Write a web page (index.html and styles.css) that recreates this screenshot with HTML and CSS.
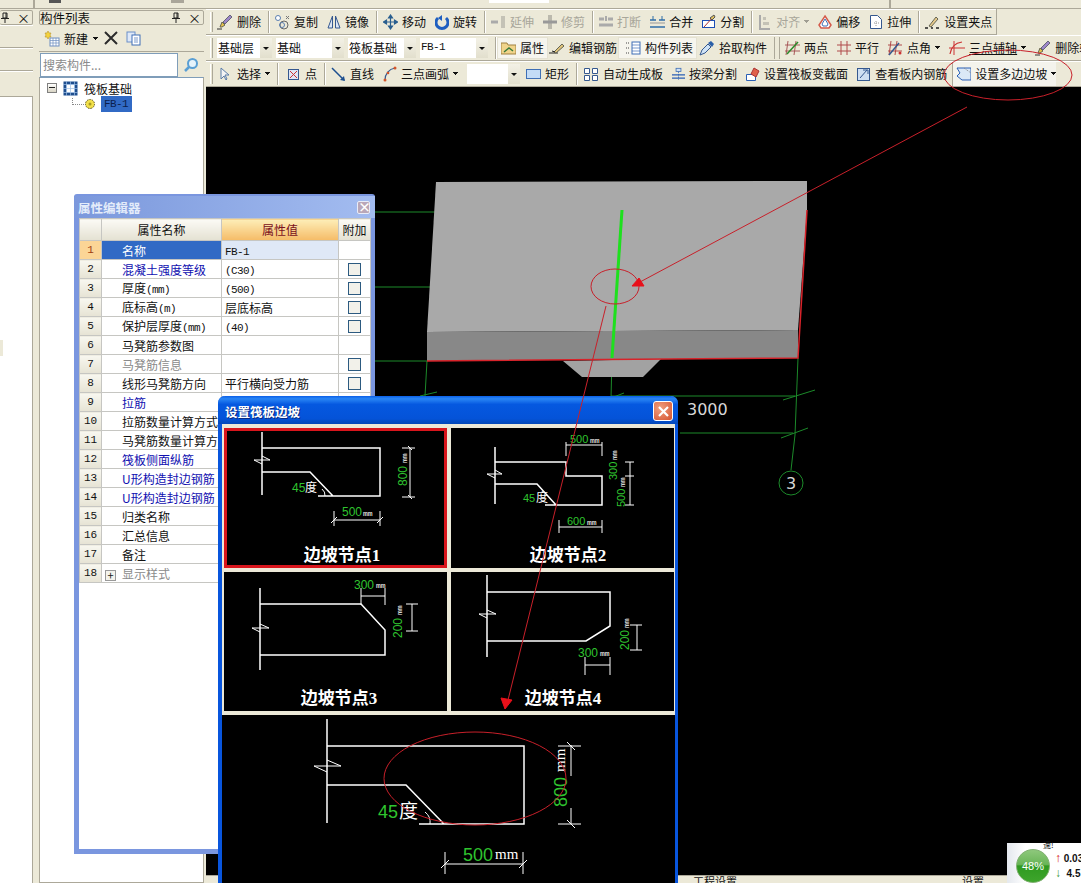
FILE: index.html
```html
<!DOCTYPE html>
<html lang="zh-CN">
<head>
    <meta charset="UTF-8">
    <title>筏板基础 - 设置筏板边坡</title>
    <link rel="stylesheet" href="styles.css">
</head>
<body>
<div class="app">
    <!-- top menu strip, mostly cut off -->
    <div class="topstrip">
        <i class="stub stub-a"></i><i class="stub stub-b"></i><i class="stub stub-c"></i><i class="stub stub-d"></i><i class="stub stub-e"></i>
    </div>

    <div class="workspace">
        <div class="dock dock-narrow">
            <div class="dock-head"><span class="dock-title"></span><svg class="pin" width="10" height="11" viewBox="0 0 10 11"><path d="M3 1h4v5H3zM1 6.500h8M5 7v4M6 1v5" fill="none" stroke="#222"/></svg><span class="close">&times;</span></div>
            <div class="dock-row"></div>
            <div class="dock-row"></div>
            <div class="dock-row dock-row-last"></div>
            <div class="dock-white"></div>
        </div>

        <div class="dock dock-list">
            <div class="dock-head"><span class="dock-title">构件列表</span><svg class="pin" width="10" height="11" viewBox="0 0 10 11"><path d="M3 1h4v5H3zM1 6.500h8M5 7v4M6 1v5" fill="none" stroke="#222"/></svg><span class="close">&times;</span></div>
            <div class="list-tools">
                <svg width="17" height="17" viewBox="0 0 17 17"><path d="M5 1l1 2h2l-1 2 1 2H6L5 9 4 7H2l1-2-1-2h2z" fill="#f4d23c" stroke="#b8962a" stroke-width=".6"/><rect x="7" y="8" width="9" height="8" fill="#fff" stroke="#6f8fc0"/><path d="M7 10.500h9M7 13h9M10 8v8M13 8v8" stroke="#6f8fc0" stroke-width=".7"/></svg>
                <span>新建</span><i class="caret"></i>
                <svg class="tool-x" width="14" height="14" viewBox="0 0 14 14"><path d="M1 1l12 12M13 1L1 13" stroke="#2b2b2b" stroke-width="2"/></svg>
                <svg class="tool-copy" width="15" height="15" viewBox="0 0 15 15"><rect x="1" y="1" width="8" height="10" fill="#dfe9f8" stroke="#6a8fc8"/><rect x="6" y="4" width="8" height="10" fill="#fff" stroke="#3f6fb5"/><path d="M8 7h4M8 9h4M8 11h4" stroke="#3f6fb5" stroke-width=".7"/></svg>
            </div>
            <div class="list-search">
                <input class="search-input" type="text" placeholder="搜索构件...">
                <svg width="16" height="16" viewBox="0 0 16 16"><circle cx="9.500" cy="6.500" r="4.500" fill="#e6f3fb" stroke="#5a9fd4" stroke-width="2"/><path d="M6 10l-4 4" stroke="#5a9fd4" stroke-width="2.500"/></svg>
            </div>
            <div class="tree">
                <div class="tree-root">
                    <span class="tree-minus"></span>
                    <svg width="15" height="15" viewBox="0 0 15 15"><rect x=".5" y=".5" width="14" height="14" fill="#1f4f8f"/><rect x="3.500" y="3.500" width="8" height="8" fill="#fff"/><path d="M0 3.500h15M0 7.500h15M0 11.500h15M3.500 0v15M7.500 0v15M11.500 0v15" stroke="#9fc0e6" stroke-width=".7"/></svg>
                    <span>筏板基础</span>
                </div>
                <div class="tree-child">
                    <span class="tree-dots"></span>
                    <svg width="12" height="12" viewBox="0 0 12 12"><circle cx="6" cy="6" r="4.500" fill="#f2e04a" stroke="#5a5020" stroke-dasharray="1.500 1"/><circle cx="6" cy="6" r="1.500" fill="#a89a20"/></svg>
                    <span class="tree-sel">FB-1</span>
                </div>
            </div>
        </div>

        <div class="main">
            <div class="tbar tbar-first">
                <i class="grip"></i>
                <div class="tbtn"><svg width="16" height="16" viewBox="0 0 16 16"><path d="M0 15h5" stroke="#333"/><path d="M3 13l2-5 3 3-3 2z" fill="#e6c24a" stroke="#665"/><path d="M6 8l7-7 2 2-7 7z" fill="#9c86c8" stroke="#667"/></svg><span>删除</span></div>
                <i class="sep"></i>
                <div class="tbtn"><svg width="15" height="16" viewBox="0 0 15 16"><circle cx="3" cy="4" r="2.500" fill="#fff" stroke="#5b7fb0"/><circle cx="9" cy="11" r="4" fill="none" stroke="#666"/><circle cx="7" cy="11" r="2.500" fill="none" stroke="#5b7fb0"/><path d="M11 2l3 3M14 2l-3 3" stroke="#777"/></svg><span>复制</span></div>
                <div class="tbtn"><svg width="14" height="16" viewBox="0 0 14 16"><path d="M5.500 2v12H1zM8.500 2v12H13z" fill="#dce6f5" stroke="#35588f"/></svg><span>镜像</span></div>
                <i class="sep"></i>
                <div class="tbtn"><svg width="15" height="16" viewBox="0 0 15 16"><path d="M7.500 2v12M1.500 8h12M7.500 1L5.500 4h4zM7.500 15l-2-3h4zM.5 8l3-2v4zM14.500 8l-3-2v4z" fill="#2a5f8f" stroke="#2a5f8f" stroke-width="1.200"/></svg><span>移动</span></div>
                <div class="tbtn"><svg width="14" height="16" viewBox="0 0 14 16"><path d="M3 4a6 6 0 1 0 8 0" fill="none" stroke="#1f5fc0" stroke-width="3"/><path d="M7 1v6L3 4z" fill="#1f5fc0"/></svg><span>旋转</span></div>
                <i class="sep"></i>
                <div class="tbtn off"><svg width="15" height="16" viewBox="0 0 15 16"><path d="M0 8h7" stroke="#aaa" stroke-width="3"/><path d="M10 2h4v12h-4z" fill="#c4c2b6"/></svg><span>延伸</span></div>
                <div class="tbtn off"><svg width="14" height="16" viewBox="0 0 14 16"><path d="M5 1h4v14H5z" fill="#bbb9ad"/><path d="M0 8h14" stroke="#999" stroke-width="3"/></svg><span>修剪</span></div>
                <i class="sep"></i>
                <div class="tbtn off"><svg width="14" height="16" viewBox="0 0 14 16"><path d="M0 5h5M9 5h5M0 11h14" stroke="#aaa" stroke-width="3"/><path d="M7 2v5" stroke="#aaa" stroke-width="2"/></svg><span>打断</span></div>
                <div class="tbtn"><svg width="15" height="16" viewBox="0 0 15 16"><path d="M0 13h15M0 6h6M9 6h6" stroke="#2f6ea8" stroke-width="1.500"/><path d="M3 2v4M12 2v4" stroke="#2f6ea8"/><path d="M0 9h15" stroke="#999"/></svg><span>合并</span></div>
                <div class="tbtn"><svg width="14" height="16" viewBox="0 0 14 16"><rect x=".5" y="6.500" width="12" height="7" fill="#fff" stroke="#1d4fb5"/><path d="M2 13L12 2" stroke="#a33"/><path d="M8 4l4-3 1 2-3 3z" fill="#e0c060" stroke="#555"/></svg><span>分割</span></div>
                <i class="sep"></i>
                <div class="tbtn off"><svg width="14" height="16" viewBox="0 0 14 16"><path d="M2 1v14h10" fill="none" stroke="#aaa" stroke-width="2"/><path d="M5 3h3v3H5zM5 8h6v3H5z" fill="#c4c2b6"/></svg><span>对齐</span><i class="caret caret-off"></i></div>
                <div class="tbtn"><svg width="14" height="16" viewBox="0 0 14 16"><path d="M7 2l6 9-2 3H3l-2-3z" fill="#fff" stroke="#d45a4a" stroke-width="1.500"/><path d="M7 5l3 5-1 2H5l-1-2z" fill="none" stroke="#3f6fb5"/></svg><span>偏移</span></div>
                <div class="tbtn"><svg width="14" height="16" viewBox="0 0 14 16"><path d="M1.500 1.500h7l4 4v9h-11z" fill="#fff" stroke="#35588f"/><path d="M5 9h5M7 7v5" stroke="#999" stroke-dasharray="1 1"/></svg><span>拉伸</span></div>
                <i class="sep"></i>
                <div class="tbtn"><svg width="15" height="16" viewBox="0 0 15 16"><path d="M0 14h3M6 14h2M11 14h3" stroke="#222" stroke-width="1.500"/><path d="M4 12l7-9 2 2-7 8z" fill="#e6c98a" stroke="#665"/></svg><span>设置夹点</span></div>
            </div>

            <div class="tbar">
                <i class="grip"></i>
                <div class="combos">
                    <div class="combo combo-sm"><span>基础层</span></div>
                    <div class="combo"><span>基础</span></div>
                    <div class="combo"><span>筏板基础</span></div>
                    <div class="combo"><span class="lat">FB-1</span></div>
                </div>
                <i class="sep"></i>
                <div class="tgroup">
                    <div class="tbtn on"><svg width="15" height="16" viewBox="0 0 15 16"><path d="M0 3h6l1 2h8v9H0z" fill="#f0d48a" stroke="#a08040"/><path d="M3 12l5-4 4 3" fill="none" stroke="#3a7a3a" stroke-width="1.500"/></svg><span>属性</span></div>
                    <div class="tbtn"><svg width="16" height="16" viewBox="0 0 16 16"><path d="M0 13h9" stroke="#222"/><path d="M5 12l8-8 2 2-8 7z" fill="#e0c47a" stroke="#665"/><path d="M3 11l3 1" stroke="#222"/></svg><span>编辑钢筋</span></div>
                    <div class="tbtn on"><svg width="19" height="16" viewBox="0 0 19 16"><rect x="10" y="2" width="8" height="12" fill="#fff" stroke="#3f6fb5"/><path d="M10 5h8M10 8h8M10 11h8" stroke="#3f6fb5" stroke-width=".7"/><path d="M4 3h3M4 8h3M4 13h3" stroke="#444" stroke-dasharray="1 1"/></svg><span>构件列表</span></div>
                    <div class="tbtn"><svg width="17" height="16" viewBox="0 0 17 16"><path d="M2 15l2-5 6-6 3 3-6 6z" fill="#cfe3f6" stroke="#35588f"/><path d="M10 3l3-2 3 3-2 3z" fill="#2b5fa8"/></svg><span>拾取构件</span></div>
                </div>
                <i class="sep sep-double"></i>
                <div class="tbtn"><svg width="15" height="16" viewBox="0 0 15 16"><path d="M3 1l-2 14M11 1l-2 14M0 5h15M0 11h15" stroke="#a85a5a"/><path d="M2 14L13 2" stroke="#2a8a2a" stroke-width="1.500"/></svg><span>两点</span></div>
                <div class="tbtn"><svg width="14" height="16" viewBox="0 0 14 16"><path d="M4 1v14M10 1v14M0 5h14M0 11h14" stroke="#b04a4a"/></svg><span>平行</span></div>
                <div class="tbtn"><svg width="15" height="16" viewBox="0 0 15 16"><path d="M3 1l-2 14M9 1L7 15M0 5h14M0 11h14" stroke="#b04a4a"/><path d="M1 15L11 3" stroke="#35588f" stroke-width="1.500"/><circle cx="12" cy="13" r="1.500" fill="#c33"/></svg><span>点角</span><i class="caret"></i></div>
                <div class="tbtn"><svg width="16" height="16" viewBox="0 0 16 16"><path d="M1 14C2 7 6 3 13 2" fill="none" stroke="#c33" stroke-width="1.200"/><path d="M5 1v14M0 8h16" stroke="#c33"/></svg><span class="under">三点辅轴</span><i class="caret"></i></div>
                <div class="tbtn"><svg width="16" height="16" viewBox="0 0 16 16"><path d="M0 15h5" stroke="#333"/><path d="M3 13l2-5 3 3-3 2z" fill="#e6c24a" stroke="#665"/><path d="M6 8l7-7 2 2-7 7z" fill="#9c86c8" stroke="#667"/></svg><span>删除辅轴</span></div>
            </div>

            <div class="tbar">
                <i class="grip"></i>
                <div class="tbtn"><svg width="16" height="16" viewBox="0 0 16 16"><path d="M4 2v11l3-3 2 4 1-1-2-4h4z" fill="#f4f4f4" stroke="#5a7ca8"/></svg><span>选择</span><i class="caret"></i></div>
                <i class="sep"></i>
                <div class="tbtn"><svg width="17" height="16" viewBox="0 0 17 16"><rect x="4.500" y="3.500" width="10" height="10" fill="#dfe6f4" stroke="#35588f"/><path d="M6 5l7 7M13 5l-7 7" stroke="#c33"/></svg><span>点</span></div>
                <i class="sep"></i>
                <div class="tbtn"><svg width="15" height="16" viewBox="0 0 15 16"><path d="M1 2l12 12" stroke="#1d4f8f" stroke-width="1.500"/><path d="M14 15l-5-1 4-4z" fill="#1d4f8f"/></svg><span>直线</span></div>
                <div class="tbtn"><svg width="14" height="16" viewBox="0 0 14 16"><path d="M2 14C2 8 6 3 12 2" fill="none" stroke="#35588f" stroke-width="1.200"/><circle cx="2" cy="14" r="1.500" fill="#d4552a"/><circle cx="12" cy="2" r="1.500" fill="#d4552a"/><circle cx="5" cy="7" r="1.300" fill="#d4552a"/></svg><span>三点画弧</span><i class="caret"></i></div>
                <div class="combo combo-blank"></div>
                <div class="tbtn"><svg width="15" height="16" viewBox="0 0 15 16"><rect x=".5" y="3.500" width="14" height="9" fill="#c4dcf6" stroke="#3f6fb5"/></svg><span>矩形</span></div>
                <i class="sep"></i>
                <div class="tbtn"><svg width="16" height="16" viewBox="0 0 16 16"><path d="M1.500 2.500h5v5h-5zM9.500 2.500h5v5h-5zM1.500 9.500h5v5h-5zM9.500 9.500h5v5h-5z" fill="#fff" stroke="#35588f"/></svg><span>自动生成板</span></div>
                <div class="tbtn"><svg width="13" height="16" viewBox="0 0 16 16"><rect x="5" y="1" width="6" height="4" fill="#cfe0f4" stroke="#3f6fb5"/><path d="M8 5v10" stroke="#3f6fb5" stroke-dasharray="2 1"/><path d="M0 9h16M0 13h16" stroke="#2a5fb5" stroke-width="1.500"/></svg><span>按梁分割</span></div>
                <div class="tbtn"><svg width="14" height="16" viewBox="0 0 14 16"><path d="M.5 8.500h9v6h-9z" fill="#fff" stroke="#2a5fb5"/><path d="M5 8l3-6 5 3-3 6z" fill="#e0604a" stroke="#a33"/></svg><span>设置筏板变截面</span></div>
                <div class="tbtn"><svg width="14" height="16" viewBox="0 0 14 16"><rect x=".5" y="2.500" width="12" height="12" fill="#cfdff2" stroke="#35588f"/><path d="M3 12L10 4M6 4h5v4" fill="none" stroke="#35588f"/></svg><span>查看板内钢筋</span></div>
                <div class="tbtn hl"><svg width="15" height="16" viewBox="0 0 15 16"><path d="M1 2h14v12H6l-5-4 3-3z" fill="#dbe8f6" stroke="#2a5fb5"/><path d="M8 2l7 5" stroke="#888" stroke-dasharray="1 1"/></svg><span>设置多边边坡</span><i class="caret"></i></div>
            </div>

            <!-- 3D model view -->
            <svg class="viewport" width="875" height="788" viewBox="206 87 875 788">
                <path class="axis" d="M206 212H436M206 287H430M206 361H427M427 361L425 396M612 358L611 398M798 358L795 435L791 470M611 396H795M680 433H793M420 396L437 392M611 398L624 393M783 400L815 390M781 438L808 428"/>
                <path class="slab-top" d="M436 182L807 181L807 210L798 330L427 332Z"/>
                <path class="slab-front" d="M427 332L798 330L798 358L427 361Z"/>
                <path class="slab-under" d="M563 361L661 359L643 377H582Z"/>
                <path class="slab-edge" d="M427 361L798 358L807 210"/>
                <path class="rebar" d="M622 210L612 358"/>
                <text class="dim-label" x="687" y="415">3000</text>
                <circle class="axis" cx="791" cy="483" r="12"/>
                <text class="dim-label axis-no" x="791" y="489">3</text>
            </svg>
            <div class="statusbar"><span class="status-a">工程设置</span><span class="status-b">设置</span></div>
        </div>
    </div>

    <!-- property editor, floats over the view -->
    <div class="propwin">
        <div class="propwin-title"><span>属性编辑器</span><span class="propwin-close">&times;</span></div>
        <table class="props">
            <colgroup><col class="c-no"><col class="c-name"><col class="c-val"><col class="c-add"></colgroup>
            <thead><tr><th></th><th>属性名称</th><th class="th-val">属性值</th><th>附加</th></tr></thead>
            <tbody>
                <tr class="row-cur"><td class="no">1</td><td class="nm">名称</td><td class="val"><span class="lat">FB-1</span></td><td></td></tr>
                <tr><td class="no">2</td><td class="nm link">混凝土强度等级</td><td class="val"><span class="lat">(C30)</span></td><td class="chk"><i></i></td></tr>
                <tr><td class="no">3</td><td class="nm">厚度<span class="lat">(mm)</span></td><td class="val"><span class="lat">(500)</span></td><td class="chk"><i></i></td></tr>
                <tr><td class="no">4</td><td class="nm">底标高<span class="lat">(m)</span></td><td class="val">层底标高</td><td class="chk"><i></i></td></tr>
                <tr><td class="no">5</td><td class="nm">保护层厚度<span class="lat">(mm)</span></td><td class="val"><span class="lat">(40)</span></td><td class="chk"><i></i></td></tr>
                <tr><td class="no">6</td><td class="nm">马凳筋参数图</td><td class="val"></td><td></td></tr>
                <tr><td class="no">7</td><td class="nm dim">马凳筋信息</td><td class="val"></td><td class="chk"><i></i></td></tr>
                <tr><td class="no">8</td><td class="nm">线形马凳筋方向</td><td class="val">平行横向受力筋</td><td class="chk"><i></i></td></tr>
                <tr><td class="no">9</td><td class="nm link">拉筋</td><td class="val"></td><td></td></tr>
                <tr><td class="no">10</td><td class="nm">拉筋数量计算方式</td><td class="val"></td><td></td></tr>
                <tr><td class="no">11</td><td class="nm">马凳筋数量计算方式</td><td class="val"></td><td></td></tr>
                <tr><td class="no">12</td><td class="nm link">筏板侧面纵筋</td><td class="val"></td><td></td></tr>
                <tr><td class="no">13</td><td class="nm link">U形构造封边钢筋</td><td class="val"></td><td></td></tr>
                <tr><td class="no">14</td><td class="nm link">U形构造封边钢筋</td><td class="val"></td><td></td></tr>
                <tr><td class="no">15</td><td class="nm">归类名称</td><td class="val"></td><td></td></tr>
                <tr><td class="no">16</td><td class="nm">汇总信息</td><td class="val"></td><td></td></tr>
                <tr><td class="no">17</td><td class="nm">备注</td><td class="val"></td><td></td></tr>
                <tr><td class="no">18</td><td class="nm dim"><i class="plus">+</i>显示样式</td><td class="val"></td><td></td></tr>
            </tbody>
        </table>
    </div>

    <!-- edge slope dialog -->
    <div class="dialog">
        <div class="dialog-title"><span>设置筏板边坡</span><span class="dialog-close">
            <svg width="11" height="11" viewBox="0 0 11 11"><path d="M1 1l9 9M10 1l-9 9" stroke="#fff" stroke-width="2.200"/></svg>
        </span></div>
        <div class="dialog-body">
            <div class="nodes">
                <div class="node node-picked">
                    <svg width="223" height="140" viewBox="224 428 223 140">
                        <path class="ln" d="M262 432V495M262 448H380V496H318M262 472H310L333 496"/>
                        <path class="ln thin" d="M254 460H270L262 456M254 460L262 464M325 496a8 8 0 0 0-3-7"/>
                        <path class="ln thin" d="M334 520H380M334 511V526M380 511V526M331 523L337 517M377 523L383 517M410 448V497M402 448H415M402 497H415M408 446L412 450M408 495L412 499"/>
                        <text class="gr" x="292" y="492">45</text><text class="wh" x="305" y="492">度</text>
                        <text class="gr" x="342" y="516">500</text><text class="wh mm" x="363" y="516">mm</text>
                        <text class="gr" transform="translate(407 486) rotate(-90)">800</text><text class="wh mm" transform="translate(407 463) rotate(-90)">mm</text>
                        <text class="cap" x="342" y="561">边坡节点1</text>
                    </svg>
                </div>
                <div class="node">
                    <svg width="223" height="140" viewBox="451 428 223 140">
                        <path class="ln" d="M495 447V504M495 462H566V476H602V505H545M495 484H537L556 505"/>
                        <path class="ln thin" d="M487 474H502L495 470M487 474L495 478M566 442V456M602 442V456M566 445H602M559 527H602M559 520V533M602 520V533M630 462V505M625 462H634M625 476H634M625 505H634"/>
                        <text class="gr sm" x="570" y="443">500</text><text class="wh mm" x="590" y="443">mm</text>
                        <text class="gr sm" x="523" y="502">45</text><text class="wh" x="536" y="502">度</text>
                        <text class="gr sm" x="567" y="525">600</text><text class="wh mm" x="587" y="525">mm</text>
                        <text class="gr sm" transform="translate(617 480) rotate(-90)">300</text><text class="wh mm" transform="translate(617 460) rotate(-90)">mm</text>
                        <text class="gr sm" transform="translate(625 507) rotate(-90)">500</text><text class="wh mm" transform="translate(625 487) rotate(-90)">mm</text>
                        <text class="cap" x="568" y="561">边坡节点2</text>
                    </svg>
                </div>
                <div class="node">
                    <svg width="223" height="139" viewBox="224 572 223 139">
                        <path class="ln" d="M260 588V670M260 604H361L385 630V655H260"/>
                        <path class="ln thin" d="M252 628H269L260 624M252 628L260 632M361 588V605M385 588V605M361 596H385M412 604V631M406 604H418M406 631H418"/>
                        <text class="gr" x="354" y="589">300</text><text class="wh mm" x="376" y="588">mm</text>
                        <text class="gr" transform="translate(402 638) rotate(-90)">200</text><text class="wh mm" transform="translate(402 615) rotate(-90)">mm</text>
                        <text class="cap" x="339" y="704">边坡节点3</text>
                    </svg>
                </div>
                <div class="node">
                    <svg width="223" height="139" viewBox="451 572 223 139">
                        <path class="ln" d="M487 575V657M487 592H610V626L586 641H487"/>
                        <path class="ln thin" d="M479 614H496L487 610M479 614L487 618M585 657V675M610 657V675M585 665H610M637 625V650M630 625H642M630 650H642"/>
                        <text class="gr" x="578" y="657">300</text><text class="wh mm" x="600" y="656">mm</text>
                        <text class="gr" transform="translate(629 650) rotate(-90)">200</text><text class="wh mm" transform="translate(629 628) rotate(-90)">mm</text>
                        <text class="cap" x="563" y="704">边坡节点4</text>
                    </svg>
                </div>
            </div>
            <div class="node-large">
                <svg width="453" height="168" viewBox="222 715 453 168">
                    <path class="ln" d="M327 719V823M327 746H524V824H419M327 785H406L444 824"/>
                    <path class="ln thin" d="M314 766H341L327 760M314 766L327 772M430 824a13 13 0 0 0-5-12M571 745V776M571 808V824M558 746H581M558 824H581M445 852V874M523 852V874M445 864H523M441 868L449 860M519 868L527 860M567 742L575 750M567 820L575 828"/>
                    <text class="gr big" x="378" y="818">45</text><text class="wh big" x="399" y="818">度</text>
                    <text class="gr big" x="463" y="861">500</text><text class="wh big-mm" x="495" y="859">mm</text>
                    <text class="gr big" transform="translate(567 807) rotate(-90)">800</text><text class="wh big-mm" transform="translate(565 772) rotate(-90)">mm</text>
                </svg>
            </div>
        </div>
    </div>

    <div class="netwidget">
        <span class="net-top">速!</span>
        <div class="net-ball">48%</div>
        <div class="net-nums">
            <div><b class="up">&#8593;</b> 0.03</div>
            <div><b class="down">&#8595;</b>&nbsp; 4.5</div>
        </div>
    </div>

    <i class="edge-stub"></i>

    <!-- red markup drawn over the screenshot -->
    <svg class="markup" width="1081" height="883" viewBox="0 0 1081 883">
        <ellipse cx="1008" cy="75" rx="64" ry="25"/>
        <ellipse cx="615" cy="286.500" rx="24" ry="17.500"/>
        <ellipse cx="475" cy="778.500" rx="91" ry="46.500"/>
        <path d="M967 107L640 282"/>
        <path class="head" d="M632 286L639 278L644 286Z"/>
        <path d="M606 306L508 700"/>
        <path class="head" d="M505 709L501 698L512 700Z"/>
    </svg>
</div>
</body>
</html>
```

FILE: styles.css
```css
* {
    box-sizing: border-box;
}

html, body {
    margin: 0;
    height: 100%;
    overflow: hidden;
}

body {
    font-family: "Noto Sans CJK SC", "Liberation Sans", sans-serif;
    font-size: 12px;
    color: #111;
    background: #ece9d8;
}

svg {
    display: block;
    flex-shrink: 0;
}

.lat {
    font-family: "Liberation Mono", monospace;
    font-size: 11px;
    letter-spacing: -0.6px;
    line-height: 1;
}

.app {
    position: relative;
    width: 1081px;
    height: 883px;
    display: flex;
    flex-direction: column;
    overflow: hidden;
}

/* top strip */
.topstrip {
    height: 9px;
    flex-shrink: 0;
    border-bottom: 1px solid #aca899;
    display: flex;
}

.stub {
    display: block;
    height: 3px;
}

.stub-a { width: 2px; height: 8px; background: #aca899; margin-left: 33px; }
.stub-b { width: 12px; background: #555; margin-left: 14px; }
.stub-c { width: 13px; background: #aaa69a; margin-left: 110px; }
.stub-d { width: 60px; background: #fff; margin-left: 305px; }
.stub-e { width: 2px; height: 8px; background: #aca899; margin-left: 340px; }

.workspace {
    flex: 1;
    display: flex;
    min-height: 0;
}

/* docked panels */
.dock {
    display: flex;
    flex-direction: column;
    padding-top: 1px;
}

.dock-narrow {
    width: 38px;
    padding-right: 5px;
}

.dock-list {
    width: 168px;
    padding: 1px 2px 0 1px;
}

.dock-head {
    height: 15px;
    border: 1px solid #aca899;
    border-radius: 2px;
    display: flex;
    align-items: center;
    font-size: 12px;
    line-height: 13px;
    flex-shrink: 0;
}

.dock-narrow .dock-head {
    border-left: 0;
}

.dock-title {
    flex: 1;
    font-size: 12.500px;
}

.pin {
    margin-right: 7px;
}

.close {
    font-size: 13px;
    width: 12px;
    margin-right: 3px;
    text-align: center;
}

.dock-row {
    height: 23px;
    border-bottom: 1px solid #aca899;
    border-top: 1px solid #fff;
}

.dock-row-last {
    height: 26px;
}

.dock-white {
    flex: 1;
    background: #fff;
    border-right: 1px solid #aca899;
}

.list-tools {
    height: 27px;
    display: flex;
    align-items: center;
    padding-left: 4px;
    gap: 4px;
    border-bottom: 1px solid #aca899;
    flex-shrink: 0;
}

.tool-x {
    margin-left: 2px;
}

.tool-copy {
    margin-left: 4px;
}

.list-search {
    height: 25px;
    display: flex;
    align-items: center;
    gap: 5px;
    padding-left: 1px;
    flex-shrink: 0;
}

.search-input {
    width: 138px;
    height: 24px;
    border: 1px solid #7f9db9;
    font-family: inherit;
    font-size: 12px;
    padding: 0 2px;
    background: #fff;
}

.search-input::placeholder {
    color: #8a8a8a;
}

.tree {
    flex: 1;
    background: #fff;
    border: 1px solid #aca899;
    border-top-color: #7f9db9;
    padding: 2px 0 0 7px;
}

.tree-root {
    display: flex;
    align-items: center;
    height: 16px;
}

.tree-minus {
    width: 10px;
    height: 10px;
    border: 1px solid #808080;
    background: linear-gradient(to bottom, #fff, #d8d4c4);
    position: relative;
    margin-right: 6px;
}

.tree-minus::after {
    content: "";
    position: absolute;
    left: 1px;
    right: 1px;
    top: 3px;
    height: 1px;
    background: #222;
}

.tree-root span:last-child {
    margin-left: 6px;
}

.tree-child {
    display: flex;
    align-items: center;
    height: 16px;
    padding-left: 25px;
}

.tree-dots {
    width: 12px;
    height: 7px;
    border-left: 1px dotted #888;
    border-bottom: 1px dotted #888;
    margin-top: -6px;
}

.tree-sel {
    margin-left: 5px;
    padding: 0 3px;
    width: 31px;
    height: 16px;
    line-height: 16px;
    background: #316ac5;
    color: #0b1e4d;
    font-family: "Liberation Mono", monospace;
    font-size: 11px;
    letter-spacing: -0.6px;
}

/* main column */
.main {
    flex: 1;
    min-width: 0;
    display: flex;
    flex-direction: column;
}

.tbar {
    height: 26px;
    flex-shrink: 0;
    display: flex;
    align-items: center;
    gap: 9px;
    padding-left: 4px;
    border-bottom: 1px solid #aca899;
    box-shadow: inset 0 1px 0 #fff;
    white-space: nowrap;
    overflow: hidden;
}

.tbar-first {
    margin-right: 84px;
    border-right: 1px solid #aca899;
}

.grip {
    width: 3px;
    height: 20px;
    border-left: 1px solid #fff;
    border-right: 1px solid #aca899;
    margin-right: -5px;
    flex-shrink: 0;
}

.sep {
    width: 2px;
    height: 22px;
    border-left: 1px solid #aca899;
    border-right: 1px solid #fff;
    margin: 0 -4px 0 -2px;
    flex-shrink: 0;
}

.sep-double {
    width: 6px;
    border-right: 1px solid #aca899;
}

.tbtn {
    display: flex;
    align-items: center;
    gap: 4px;
    flex-shrink: 0;
    height: 22px;
}

.tbtn.off {
    color: #a8a69a;
}

.tbtn.on {
    margin: 0 -4px;
    padding: 0 4px;
    background: #f6f5ee;
    box-shadow: inset 0 0 0 1px #e4e1d2;
}

.tbtn.hl {
    margin-left: -4px;
    padding-left: 3px;
    height: 24px;
    background: #f4f3ec;
    border-left: 1px solid #aca899;
}

.under {
    text-decoration: underline;
}

.caret {
    width: 5px;
    height: 3px;
    background: linear-gradient(#111, #111) top center / 5px 1px no-repeat,
                linear-gradient(#111, #111) center / 3px 1px no-repeat,
                linear-gradient(#111, #111) bottom center / 1px 1px no-repeat;
    flex-shrink: 0;
}

.caret-off {
    opacity: 0.35;
}

.list-tools .caret {
    margin-left: 1px;
}

.combos {
    display: flex;
    gap: 4px;
}

.combo {
    width: 68px;
    height: 20px;
    background: #fff;
    display: flex;
    align-items: center;
    padding-left: 1px;
    position: relative;
    flex-shrink: 0;
}

.combo-sm {
    width: 55px;
}

.combo-blank {
    width: 53px;
    margin-right: -3px;
}

.combo::after {
    content: "";
    position: absolute;
    right: 0;
    top: 0;
    bottom: 0;
    width: 12px;
    background: linear-gradient(to bottom, #f3f1e6, #e2dfcd);
}

.combo::before {
    content: "";
    position: absolute;
    right: 3px;
    top: 9px;
    z-index: 1;
    border-left: 3px solid transparent;
    border-right: 3px solid transparent;
    border-top: 3px solid #111;
}

.tgroup {
    display: flex;
    align-items: center;
    gap: 5px;
    margin-left: -5px;
    flex-shrink: 0;
}

.tgroup .tbtn.on:first-child {
    margin-left: 0;
    margin-right: -4px;
}

/* 3D view */
.viewport {
    display: block;
    background: #000;
}

.axis {
    fill: none;
    stroke: #1c8a2a;
    stroke-width: 1;
}

.slab-top { fill: #a9a9a9; }
.slab-front { fill: #888; }
.slab-under { fill: #a2a2a2; }

.slab-edge {
    fill: none;
    stroke: #d8232a;
    stroke-width: 1.500;
}

.rebar {
    stroke: #1ee01e;
    stroke-width: 3;
}

.dim-label {
    font-family: "DejaVu Sans", sans-serif;
    font-size: 16px;
    fill: #d8d8d8;
}

.axis-no {
    text-anchor: middle;
}

.statusbar {
    flex: 1;
    display: flex;
    border-top: 1px solid #aca899;
    overflow: hidden;
    font-size: 11px;
    line-height: 11px;
}

.status-a { margin-left: 487px; }
.status-b { margin-left: 225px; }

/* property editor */
.propwin {
    position: absolute;
    left: 74px;
    top: 194px;
    width: 301px;
    height: 660px;
    background: #fff;
    border: 5px solid #7a96df;
    border-top: 2px solid #7a96df;
    border-radius: 3px 3px 0 0;
}

.propwin-title {
    height: 22px;
    margin: 0 -5px;
    padding: 0 5px 0 4px;
    display: flex;
    align-items: center;
    justify-content: space-between;
    background: linear-gradient(to right, #7b98dc, #a3bcf0);
    color: #e4ecfa;
    font-weight: bold;
    font-size: 12.500px;
}

.propwin-close {
    width: 13px;
    height: 13px;
    background: #b9a7b8;
    border: 1px solid #e8ecf8;
    border-radius: 2px;
    color: #fff;
    font-size: 13px;
    line-height: 10px;
    text-align: center;
}

.props {
    border-collapse: collapse;
    table-layout: fixed;
    width: 291px;
}

.c-no { width: 22px; }
.c-name { width: 120px; }
.c-val { width: 117px; }
.c-add { width: 32px; }

.props th, .props td {
    border: 1px solid #c6c6c2;
    padding: 0;
    height: 19px;
    line-height: 15px;
    font-weight: normal;
    white-space: nowrap;
    overflow: hidden;
}

.props th {
    height: 22px;
    text-align: center;
    background: linear-gradient(to bottom, #fbfaf5, #e4e1d2);
}

.props .th-val {
    background: linear-gradient(to bottom, #fdeeb8, #f5bb66);
    color: #7a1020;
}

.props .no {
    text-align: center;
    font-family: "Liberation Mono", monospace;
    font-size: 11px;
    background: linear-gradient(to bottom, #f8f7f0, #e6e3d4);
}

.props .nm {
    padding-left: 20px;
}

.props .val {
    padding-left: 3px;
}

.props .link {
    color: #1010b0;
}

.props .dim {
    color: #8a8a8a;
}

.row-cur .no {
    background: #fbd596 !important;
    color: #a04010;
}

.row-cur .nm {
    background: #316ac5;
    color: #fff;
}

.row-cur .val {
    background: #dfe8f6;
}

.props .chk {
    line-height: 0;
    font-size: 0;
}

.props .chk i {
    display: block;
    width: 13px;
    height: 13px;
    margin: 0 auto;
    border: 1px solid #2c5a80;
    background: #f2f1ea;
}

.props .nm:has(.plus) {
    padding-left: 3px;
}

.plus {
    display: inline-block;
    width: 11px;
    height: 11px;
    line-height: 9px;
    margin-right: 6px;
    border: 1px solid #999;
    background: #f4f3ec;
    color: #222;
    font-style: normal;
    font-size: 11px;
    text-align: center;
    vertical-align: -1px;
}

/* dialog */
.dialog {
    position: absolute;
    left: 218px;
    top: 396px;
    width: 460px;
    height: 510px;
    border: solid #0855dd;
    border-width: 0 3px 3px 4px;
    border-radius: 7px 7px 0 0;
    background: #ece9d8;
}

.dialog-title {
    height: 28px;
    margin: 0 -3px 0 -4px;
    padding: 2px 5px 0 7px;
    display: flex;
    align-items: center;
    justify-content: space-between;
    border-radius: 7px 7px 0 0;
    background: linear-gradient(to bottom, #0a5fe8, #2a86f5 10%, #0558e0 30%, #0453d8 80%, #0348b8);
    color: #fff;
    font-weight: bold;
    font-size: 12.500px;
    text-shadow: 1px 1px 0 #0a2a80;
}

.dialog-close {
    width: 20px;
    height: 20px;
    border: 1px solid #fff;
    border-radius: 3px;
    background: radial-gradient(circle at 35% 35%, #f0a080, #d6522e);
    display: flex;
    align-items: center;
    justify-content: center;
}

.nodes {
    display: grid;
    grid-template-columns: 223px 223px;
    grid-template-rows: 140px 139px;
    gap: 4px;
    padding: 4px 0 0 2px;
}

.node {
    background: #000;
}

.node-picked {
    outline: 3px solid #d8151c;
    outline-offset: -3px;
}

.node-large {
    margin-top: 4px;
    background: #000;
}

.ln {
    fill: none;
    stroke: #fff;
    stroke-width: 1.500;
}

.ln.thin {
    stroke-width: 1;
}

.gr {
    font-family: "Liberation Sans", sans-serif;
    font-size: 12px;
    fill: #2fc42f;
}

.gr.sm {
    font-size: 11px;
}

.wh {
    font-size: 12px;
    fill: #fff;
}

.wh.mm {
    font-family: "Liberation Mono", monospace;
    font-size: 8px;
}

.gr.big {
    font-size: 18px;
}

.wh.big {
    font-family: "Noto Sans CJK SC", serif;
    font-size: 19px;
}

.wh.big-mm {
    font-family: "Liberation Serif", serif;
    font-size: 15px;
}

.cap {
    font-family: "Liberation Serif", "Noto Sans CJK SC", serif;
    font-size: 17px;
    font-weight: bold;
    fill: #fff;
    text-anchor: middle;
}

/* network meter */
.netwidget {
    position: absolute;
    left: 1007px;
    top: 843px;
    width: 74px;
    height: 40px;
    background: linear-gradient(to right, #e4e8ee, #fff 25%);
    display: flex;
    align-items: center;
    font-size: 10px;
}

.net-top {
    position: absolute;
    left: 36px;
    top: -4px;
    font-size: 8px;
}

.net-ball {
    width: 34px;
    height: 34px;
    margin: 6px 0 0 9px;
    border-radius: 50%;
    border: 1px solid #7fb070;
    background: linear-gradient(to bottom, #8ec87c 0, #6ab558 45%, #2f9a20 50%, #3ea52c 100%);
    color: #fff;
    font-family: "Liberation Sans", sans-serif;
    font-size: 11px;
    line-height: 32px;
    text-align: center;
    flex-shrink: 0;
}

.net-nums {
    margin: 6px 0 0 5px;
    font-family: "Liberation Sans", sans-serif;
    font-weight: bold;
    line-height: 14px;
    white-space: nowrap;
}

.up { color: #d81818; font-size: 12px; }
.down { color: #3f9a3f; font-size: 12px; }

.edge-stub {
    position: absolute;
    left: 0;
    top: 340px;
    width: 3px;
    height: 16px;
    background: #ece9d8;
}

/* red annotations */
.markup {
    position: absolute;
    left: 0;
    top: 0;
    pointer-events: none;
}

.markup ellipse, .markup path {
    fill: none;
    stroke: #c8202a;
    stroke-width: 1;
}

.markup .head {
    fill: #e8101a;
    stroke: #e8101a;
}
```
